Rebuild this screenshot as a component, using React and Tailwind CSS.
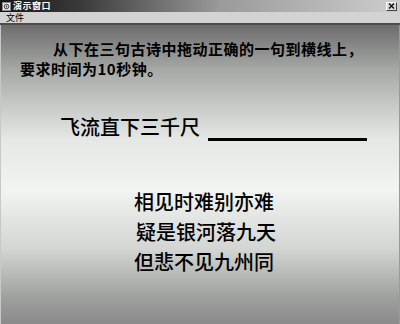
const cjk = { fontFamily: '"Noto Sans CJK SC", sans-serif' }

function TitleBar() {
  return (
    <div className="h-[12px] flex items-center justify-between bg-[linear-gradient(to_right,#151515_0%,#3a3a3a_20%,#9a9a9a_55%,#cdcdcd_100%)] pl-[2px] pr-[3px]">
      <div className="flex items-center gap-[2px]">
        <svg width="9" height="9" viewBox="0 0 9 9">
          <rect x="0.5" y="0.5" width="8" height="8" fill="#e8e8e8" stroke="#888" />
          <circle cx="4.5" cy="4.5" r="2.3" fill="none" stroke="#444" />
          <circle cx="4.5" cy="4.5" r="0.9" fill="#444" />
        </svg>
        <span className="text-[9px] leading-[12px] tracking-[0.5px] font-bold text-white whitespace-nowrap" style={cjk}>
          演示窗口
        </span>
      </div>
      <div className="w-[11px] h-[9px] flex items-center justify-center bg-[#d8d8d8] border border-t-white border-l-white border-r-[#444] border-b-[#444]">
        <svg width="7" height="6" viewBox="0 0 7 6">
          <path d="M1 0.5 L6 5.5 M6 0.5 L1 5.5" stroke="#111" strokeWidth="1.4" />
        </svg>
      </div>
    </div>
  )
}

export default function App() {
  return (
    <div className="w-[400px] h-[324px] flex flex-col overflow-hidden bg-[#888]">
      <TitleBar />
      <div className="h-[11px] bg-[#d2d3d2] flex items-center pl-[6px]">
        <span className="text-[9px] leading-[11px] text-black" style={cjk}>文件</span>
      </div>
      <div className="h-[2px] bg-[#4c4c4c]" />
      <div
        className="flex-1 border-l border-l-[#c8c8c8] border-r border-r-[#9a9a9a] bg-[linear-gradient(to_bottom,#6c6c6c_0%,#a6a9a6_15%,#e4e7e4_38%,#f2f4f2_55%,#d2d5d2_75%,#9c9e9c_92%,#8a8a8a_100%)]"
        style={cjk}
      >
        <p className="pt-[14px] pl-[19px] indent-[33px] text-[15px] leading-[20px] tracking-[0.5px] font-bold text-black">
          从下在三句古诗中拖动正确的一句到横线上，
          <br />
          要求时间为10秒钟。
        </p>

        <div className="mt-[36px] flex items-start pl-[59px]">
          <span className="text-[20px] leading-[24px] font-medium text-black">飞流直下三千尺</span>
          <div className="ml-[8px] mt-[23px] w-[159px] h-[3px] bg-black" />
        </div>

        <div className="mt-[46px] pl-[133px] text-[20px] leading-[30px] font-medium text-black">
          <div>相见时难别亦难</div>
          <div className="pl-[2px]">疑是银河落九天</div>
          <div>但悲不见九州同</div>
        </div>
      </div>
    </div>
  )
}
